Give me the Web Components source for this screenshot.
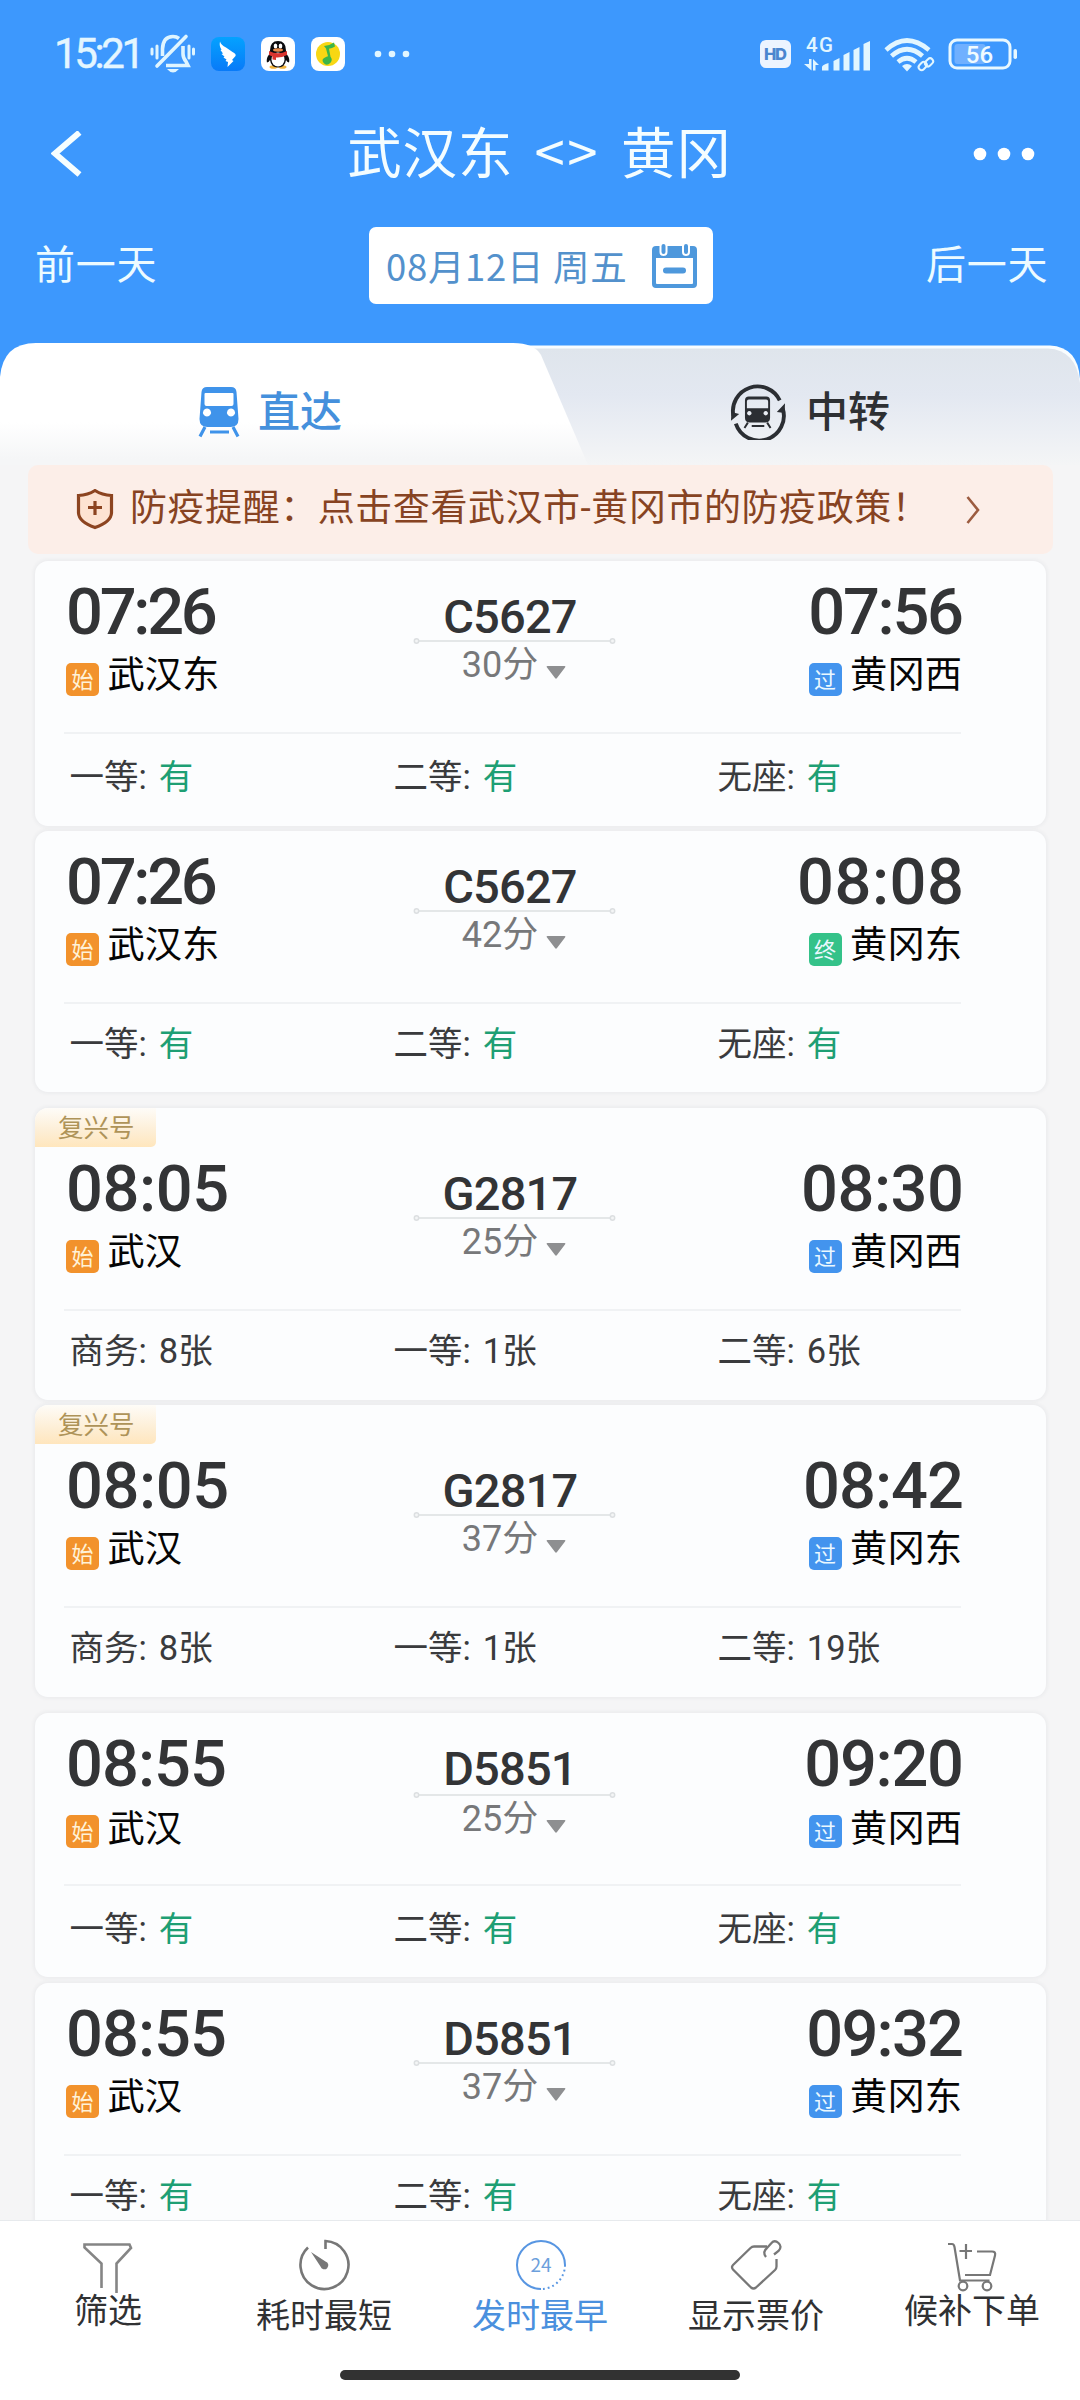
<!DOCTYPE html>
<html lang="zh-CN">
<head>
<meta charset="utf-8">
<title>武汉东 - 黄冈</title>
<style>
  html, body { margin: 0; }
  body {
    width: 1080px;
    height: 2400px;
    overflow: hidden;
    background: #f5f5f6;
    color: #333436;
    font-family: Roboto, "Noto Sans CJK SC", sans-serif;
    display: flex;
    flex-direction: column;
  }
  svg { display: block; }
</style>
</head>
<body>

<status-bar time="15:21"></status-bar>
<nav-header from="武汉东" to="黄冈"></nav-header>
<date-picker>08月12日 周五</date-picker>

<tab-bar>
  <tab-item slot="left" active>
    <svg slot="icon" width="42" height="52" viewBox="0 0 42 52">
      <path fill="#3f93ea" fill-rule="evenodd" d="M9 1h24q5 0 5.500 5L40.500 33q0 8-8 8h-23q-8 0-8-8L3.500 6Q4 1 9 1zM7.500 7q-1 0-1 1v10q0 2 2 2h25q2 0 2-2V8q0-1-1-1zM9 22.500a4 4 0 1 0 .01 0zM33 22.500a4 4 0 1 0 .01 0z"/>
      <path stroke="#3f93ea" stroke-width="3.200" fill="none" d="M7 41L2 50.500M35 41l5 9.500M12 46h19"/>
    </svg>
    直达
  </tab-item>
  <tab-item slot="right">
    <svg slot="icon" width="56" height="56" viewBox="0 0 57 58">
      <g fill="none" stroke="#2b2e33" stroke-width="4">
        <path d="M3 33A25.500 25.500 0 0 1 51 17"/>
        <path d="M54 25A25.500 25.500 0 0 1 5.500 41"/>
      </g>
      <path fill="#2b2e33" d="M0.500 38L1 29l8 2zM56.500 20L56 30l-8-1z"/>
      <path fill="#2b2e33" fill-rule="evenodd" d="M19 13h18q4 0 4 4v18q0 5-5 5H20q-5 0-5-5V17q0-4 4-4zM19 16q-2 0-2 2v7h22v-7q0-2-2-2zM19.500 28a2.300 2.300 0 1 0 .01 0zM36.500 28a2.300 2.300 0 1 0 .01 0z"/>
      <path stroke="#2b2e33" stroke-width="2" fill="none" d="M18 40l-3.500 5.500M38 40l3.500 5.500M22 43.500h13"/>
    </svg>
    中转
  </tab-item>
</tab-bar>

<notice-bar>防疫提醒：点击查看武汉市-黄冈市的防疫政策！</notice-bar>

<train-list>
  <train-card style="height:265px; --seat-shift:3px" no="C5627" depart="07:26" arrive="07:56" dls="-3.300" als="-2.300"
    from="武汉东" to="黄冈西" end="过" cost="30">
    <seat-item name="一等">有</seat-item><seat-item name="二等">有</seat-item><seat-item name="无座">有</seat-item>
  </train-card>
  <train-card style="height:261px; margin-top:5px" no="C5627" depart="07:26" arrive="08:08" dls="-3.300" als="0.500"
    from="武汉东" to="黄冈东" end="终" cost="42">
    <seat-item name="一等">有</seat-item><seat-item name="二等">有</seat-item><seat-item name="无座">有</seat-item>
  </train-card>
  <train-card style="height:292px; margin-top:16px" tag="复兴号" no="G2817" depart="08:05" arrive="08:30" dls="-0.400" als="-0.500"
    from="武汉" to="黄冈西" end="过" cost="25">
    <seat-item name="商务">8张</seat-item><seat-item name="一等">1张</seat-item><seat-item name="二等">6张</seat-item>
  </train-card>
  <train-card style="height:292px; margin-top:5px" tag="复兴号" no="G2817" depart="08:05" arrive="08:42" dls="-0.400" als="-1"
    from="武汉" to="黄冈东" end="过" cost="37">
    <seat-item name="商务">8张</seat-item><seat-item name="一等">1张</seat-item><seat-item name="二等">19张</seat-item>
  </train-card>
  <train-card style="height:264px; margin-top:16px; --seat-shift:3px; --mid-shift:2px" no="D5851" depart="08:55" arrive="09:20" dls="-1" als="-1.300"
    from="武汉" to="黄冈西" end="过" cost="25">
    <seat-item name="一等">有</seat-item><seat-item name="二等">有</seat-item><seat-item name="无座">有</seat-item>
  </train-card>
  <train-card style="height:264px; margin-top:6px" no="D5851" depart="08:55" arrive="09:32" dls="-1" als="-1.800"
    from="武汉" to="黄冈东" end="过" cost="37">
    <seat-item name="一等">有</seat-item><seat-item name="二等">有</seat-item><seat-item name="无座">有</seat-item>
  </train-card>
</train-list>

<bottom-bar>
  <bottom-item raised>
    <svg slot="icon" width="52" height="52" viewBox="0 0 52 52" fill="none" stroke="#858585" stroke-width="2.600">
      <path d="M19.500 46V21.500L2.500 5.500V2.500H47.500L49 6 34.500 21.500V51"/>
    </svg>
    筛选
  </bottom-item>
  <bottom-item>
    <svg slot="icon" width="52" height="52" viewBox="0 0 52 52" fill="none" stroke="#777" stroke-width="2.600">
      <path d="M27.500 10V2A24 24 0 1 1 10 8.500"/>
      <path fill="#777" stroke="none" d="M13 13l14.500 9.500a4 4 0 1 1-5 5z"/>
    </svg>
    耗时最短
  </bottom-item>
  <bottom-item active>
    <svg slot="icon" width="52" height="52" viewBox="-1 0 52 52" fill="none" stroke="#5896e2" stroke-width="2">
      <path d="M26 50A24 24 0 1 1 50 26"/>
      <path stroke-dasharray="1.800 3" d="M50 26A24 24 0 0 1 26 50"/>
      <text x="26" y="33" text-anchor="middle" font-size="19" fill="#6c9fdc" stroke="none" font-family="Noto Sans CJK SC, sans-serif">24</text>
    </svg>
    发时最早
  </bottom-item>
  <bottom-item>
    <svg slot="icon" width="52" height="52" viewBox="0 0 52 52" fill="none" stroke="#777" stroke-width="2.300">
      <path d="M37 7.500H24Q22 7.500 20.500 9L3 26q-2 2 0 4.500L21 48.500q2.500 2 5 0L45 31q1.500-1.500 1.500-3.500V20"/>
      <path d="M36 18q-4-5 1-9l4.500-5q3-3.500 7 0t0 8L44 15.500"/>
    </svg>
    显示票价
  </bottom-item>
  <bottom-item raised>
    <svg slot="icon" width="52" height="52" viewBox="0 0 52 52" fill="none" stroke="#777" stroke-width="2.200">
      <path d="M2 2h4q2 0 2.500 3L14 38.500H43.500"/>
      <path d="M31 9.500H46q4 0 3 4L44 33H19M20 2v15M13.500 9H26"/>
      <circle cx="17" cy="44" r="4.300"/><circle cx="41" cy="44" r="4.300"/>
    </svg>
    候补下单
  </bottom-item>
</bottom-bar>

<script>
class StatusBar extends HTMLElement {
  constructor() {
    super();
    this.attachShadow({ mode: 'open' });
    this.shadowRoot.innerHTML = `
    <style>
      :host { display: flex; align-items: center; height: 108px; padding: 0 62px 0 54px; box-sizing: border-box; background: #3d98fd; color: #e4f6ff; }
      .time { font-size: 42px; font-weight: 400; letter-spacing: -3.4px; line-height: 62px; width: 96px; white-space: nowrap; -webkit-text-stroke: .4px; }
      svg { display: block; flex: none; overflow: visible; }
      .apps { display: flex; gap: 16px; margin-left: 16px; }
      .more { margin-left: 28px; }
      .right { margin-left: auto; display: flex; align-items: center; gap: 13px; }
    </style>
    <span class="time">${this.getAttribute('time')}</span>
    <svg width="45" height="40" viewBox="150 35 45 40" fill="none" stroke="#dff5ff" stroke-width="3">
      <path stroke-linecap="round" d="M152 50v5M157 47v12M189 47v12M193.500 50v5"/>
      <path stroke-width="3.600" d="M162.500 57V50Q163 37.500 173 37.500q3.500 0 6 2M183 47v8q0 4 3 7.500l2 4H166"/>
      <path stroke-width="3.600" stroke-linecap="round" d="M186 37.500L157 67"/>
      <path fill="#dff5ff" stroke="none" d="M167 70h12q-6 7-12 0z"/>
    </svg>
    <div class="apps">
      <svg width="34" height="34" viewBox="0 0 34 34">
        <defs><linearGradient id="d" x2="0" y2="1"><stop stop-color="#04a2ff"/><stop offset="1" stop-color="#087af8"/></linearGradient></defs>
        <rect width="34" height="34" rx="8" fill="url(#d)"/>
        <path fill="#fff" d="M9 4.500q1 3.500 6 6l6.500 4.500q4 2 3 4L21 23l1.500 1-6 6 .5-5-2.500-1 1-1.500-3-2 1-1-3-2.500 1.500-.5-2.500-3.500 1-.3Q8 9 9 4.500z"/>
      </svg>
      <svg width="34" height="34" viewBox="0 0 34 34">
        <rect width="34" height="34" rx="8" fill="#fff"/>
        <ellipse cx="12.500" cy="30" rx="4" ry="1.800" fill="#f2b33c"/><ellipse cx="21.500" cy="30" rx="4" ry="1.800" fill="#f2b33c"/>
        <path fill="#0b0b0e" d="M17 4q8 0 8 9.500 0 2 1 4 3 4 2 8-2-.5-3-2.500-1 7.500-8 7.500T9 23q-1 2-3 2.500-1-4 2-8 1-2 1-4Q9 4 17 4z"/>
        <ellipse cx="17" cy="22.500" rx="6.500" ry="7" fill="#fff"/>
        <ellipse cx="14.500" cy="9" rx="1.800" ry="2.500" fill="#fff"/><ellipse cx="19.500" cy="9" rx="1.800" ry="2.500" fill="#fff"/>
        <ellipse cx="17" cy="13" rx="5" ry="1.700" fill="#e88b4a"/>
        <path fill="#d9342f" d="M8 14q9 4.500 18 0v4q-6 3-11 2.500V23l-3.500-.5V19.500L8 18z"/>
      </svg>
      <svg width="34" height="34" viewBox="0 0 34 34">
        <rect width="34" height="34" rx="8" fill="#fff"/>
        <circle cx="17" cy="17" r="12" fill="#f8d713"/>
        <path fill="#3bb54a" d="M13 9q6-.5 10-3.500l1 4q-3 2-6 2.200l1.500 8q2.500 3 0 6-4 4-7 0t3-6l1.500-.4L15 11.500z"/>
      </svg>
    </div>
    <svg class="more" width="36" height="8" viewBox="0 0 36 8" fill="#e2f6ff">
      <circle cx="5" cy="4" r="3.300"/><circle cx="19" cy="4" r="3.300"/><circle cx="33" cy="4" r="3.300"/>
    </svg>
    <div class="right">
      <svg width="31" height="30" viewBox="0 0 31 30">
        <rect y="1" width="31" height="28" rx="6" fill="#ecf4ff"/>
        <text x="4" y="21" font-size="16.500" font-weight="800" fill="#4b86cf" font-family="Inter, Roboto, sans-serif" textLength="23">HD</text>
      </svg>
      <svg width="67" height="38" viewBox="804 34 67 38" fill="#e2f6ff">
        <text x="806" y="50.500" font-size="20.500" font-weight="500" font-family="Roboto, sans-serif" textLength="27">4G</text>
        <path d="M809 58h2.500v11.500L804 63h5zM813 69.500V58l6 6h-3.500v5.500z"/>
        <path d="M822 69.500V66q0-2 6.500-4v7.500zM833.500 69.500V60l6-3v12.500zM843.500 69.500V54l6-3v18.500zM853.500 69.500V49l6-3v23.500zM863.500 69.500V43l6.500-3v29.500z"/>
      </svg>
      <svg width="51" height="38" viewBox="884 35 51 38" fill="none" stroke="#e2f6ff" stroke-width="4.600">
        <path d="M886 50q20.500-19 43 0M891.500 56q15.500-13.500 31 0M898 62q9-7.500 18 0"/>
        <path fill="#e2f6ff" stroke="none" d="M902 66q5-4 10 0l-5 5.500z"/>
        <g stroke-width="2"><rect x="918" y="63.500" width="9" height="6" rx="3" transform="rotate(-45 922 66)"/><rect x="924" y="60" width="9" height="6" rx="3" transform="rotate(-45 928 62)"/></g>
      </svg>
      <svg width="70" height="32" viewBox="948.500 38 70 32">
        <rect x="950.500" y="40" width="60" height="28" rx="7" fill="none" stroke="#e8f8ff" stroke-width="3"/>
        <rect x="955" y="44" width="31" height="20" rx="3" fill="#6fb0ff"/>
        <rect x="1014" y="49" width="3.500" height="10" rx="1.700" fill="#e8f8ff"/>
        <text x="980" y="62.500" text-anchor="middle" font-size="24" font-weight="500" fill="#f0fbff" font-family="Roboto, sans-serif">56</text>
      </svg>
    </div>`;
  }
}

class NavHeader extends HTMLElement {
  constructor() {
    super();
    this.attachShadow({ mode: 'open' });
    this.shadowRoot.innerHTML = `
    <style>
      :host { display: grid; grid-template-columns: 1fr auto 1fr; align-items: center; height: 92px; padding: 0 45px 0 51px; background: #3d98fd; color: #f4fdff; }
      svg { display: block; }
      .title { font: 400 54.500px/80px "Noto Sans CJK SC", sans-serif; letter-spacing: .9px; word-spacing: 8px; white-space: pre; margin: -8px 7px 0 0; }
      .title b { font-weight: 400; letter-spacing: 2.500px; }
      .dots { justify-self: end; }
    </style>
    <svg width="32" height="46" viewBox="1 0 32 46"><path d="M29.500 1.500L5 22.500 29.500 43.500" fill="none" stroke="#f6feff" stroke-width="6"/></svg>
    <span class="title">${this.getAttribute('from')} <b>&lt;&gt;</b> ${this.getAttribute('to')}</span>
    <svg class="dots" width="62" height="14" viewBox="0 0 62 14" fill="#fff">
      <circle cx="7" cy="7" r="6.300"/><circle cx="31" cy="7" r="6.300"/><circle cx="55" cy="7" r="6.300"/>
    </svg>`;
  }
}

class DatePicker extends HTMLElement {
  constructor() {
    super();
    this.attachShadow({ mode: 'open' });
    this.shadowRoot.innerHTML = `
    <style>
      :host { display: flex; justify-content: space-between; height: 143px; padding: 27px 35px 0; box-sizing: border-box; background: #3d98fd; color: #edfbff; }
      .day { font-size: 40px; letter-spacing: 0.8px; line-height: 78px; width: 121px; white-space: nowrap; }
      .day:last-child { width: 119px; }
      .date { display: flex; align-items: center; justify-content: space-between; width: 344px; height: 77px; padding: 0 16px 0 17px; box-sizing: border-box; border-radius: 7px; background: #fff; color: #5391cc; font: 400 36.5px/70px "Noto Sans CJK SC", sans-serif; white-space: nowrap; letter-spacing: .7px; }
    </style>
    <span class="day">前一天</span>
    <div class="date"><slot></slot>
      <svg width="45" height="46" viewBox="0 0 45 46">
        <path fill="#4e98dc" fill-rule="evenodd" d="M4 3h37q4 0 4 4v34q0 4-4 4H4q-4 0-4-4V7q0-4 4-4zM4 15v25q0 1 1 1h35q1 0 1-1V15z"/>
        <path stroke="#fff" stroke-width="8" stroke-linecap="round" d="M11.500 3v6M34 3v6"/>
        <path stroke="#4e98dc" stroke-width="4" stroke-linecap="round" d="M11.500 3v6M34 3v6"/>
        <path stroke="#4e98dc" stroke-width="6" stroke-linecap="round" d="M14 27.500h17"/>
      </svg>
    </div>
    <span class="day">后一天</span>`;
  }
}

class TabBar extends HTMLElement {
  constructor() {
    super();
    this.attachShadow({ mode: 'open' });
    this.shadowRoot.innerHTML = `
    <style>
      :host { display: grid; height: 122px; }
      svg, .row { grid-area: 1 / 1; display: block; }
      .row { display: grid; grid-template-columns: 1fr 1fr; height: 122px; }
    </style>
    <svg width="1080" height="122" viewBox="0 0 1080 122">
      <defs>
        <linearGradient id="r" x2="0" y2="1">
          <stop stop-color="#dfe5ec"/><stop offset=".4" stop-color="#e3e8f1"/><stop offset=".72" stop-color="#eceff4"/><stop offset="1" stop-color="#f4f5f6"/>
        </linearGradient>
        <linearGradient id="l" x2="0" y2="1">
          <stop offset=".65" stop-color="#fff"/><stop offset=".95" stop-color="#f5f6f7"/>
        </linearGradient>
      </defs>
      <rect width="1080" height="60" fill="#3d98fd"/>
      <path fill="#f9fdff" d="M300 2.500H1050Q1078 4 1080 36V122H300z"/>
      <path fill="url(#r)" d="M300 5.500H1048Q1076 7 1080 40V122H300z"/>
      <path fill="url(#l)" d="M0 122V34Q3 0 36 0H513Q534 0 541 12L588 122z"/>
    </svg>
    <div class="row"><slot name="left"></slot><slot name="right"></slot></div>`;
  }
}

class TabItem extends HTMLElement {
  constructor() {
    super();
    this.attachShadow({ mode: 'open' });
    this.shadowRoot.innerHTML = `
    <style>
      :host { display: flex; align-items: center; justify-content: center; gap: 20px; height: 138px; font-size: 42px; font-weight: 500; line-height: 60px; color: #2e3033; }
      :host([active]) { color: #4590dc; gap: 18px; }
      span { margin-top: 2px; }
    </style>
    <slot name="icon"></slot><span><slot></slot></span>`;
  }
}

class NoticeBar extends HTMLElement {
  constructor() {
    super();
    this.attachShadow({ mode: 'open' });
    this.shadowRoot.innerHTML = `
    <style>
      :host { display: flex; align-items: center; height: 89px; margin: 0 27px 0 28px; padding: 0 73px 0 48px; box-sizing: border-box; border-radius: 10px; background: #fceee8; color: #874322; font-size: 37px; line-height: 60px; white-space: nowrap; }
      span { margin: -1px 0 0 16px; letter-spacing: .55px; }
      .go { margin: 0 0 0 auto; }
      svg { flex: none; }
    </style>
    <svg width="38" height="42" viewBox="0 1 38 42" fill="none" stroke="#8c4420" stroke-width="3.200">
      <path fill="#fde3d2" d="M19 2.500Q26 7 35.500 7.500V25Q35 34 19 39.500 3 34 2.500 25V7.500Q12 7 19 2.500z"/>
      <path d="M12 19.500h14M19 13v14"/>
    </svg>
    <span><slot></slot></span>
    <svg class="go" width="14" height="30" viewBox="0 0 14 30" fill="none" stroke="#9c5c40" stroke-width="2.600"><path d="M1.500 2L12 15 1.500 28"/></svg>`;
  }
}

class TrainList extends HTMLElement {
  constructor() {
    super();
    this.attachShadow({ mode: 'open' });
    this.shadowRoot.innerHTML = `
    <style>
      :host { display: flex; flex-direction: column; flex: 1; min-height: 0; overflow: hidden; padding: 7px 34px 0 35px; }
    </style>
    <slot></slot>`;
  }
}

class StationBadge extends HTMLElement {
  constructor() {
    super();
    this.attachShadow({ mode: 'open' });
    const colors = { '始': '#f2922c', '过': '#4394ee', '终': '#34c289' };
    const name = this.getAttribute('name');
    this.shadowRoot.innerHTML = `
    <style>
      :host { display: block; width: 33px; height: 33px; border-radius: 5px; background: ${colors[name]}; color: #fff2d8; font-size: 22px; line-height: 35px; text-align: center; }
      :host([name="过"]), :host([name="终"]) { color: #eaf8ff; }
    </style>${name}`;
  }
}

class TrainCard extends HTMLElement {
  constructor() {
    super();
    this.attachShadow({ mode: 'open' });
    const at = (key) => this.getAttribute(key);
    this.shadowRoot.innerHTML = `
    <style>
      :host { display: block; flex: none; box-sizing: border-box; overflow: hidden; border-radius: 13px; background: #fcfdfe; box-shadow: 0 0 4px 1px rgba(40, 50, 60, .06); }
      .tag { width: 121px; height: 39px; margin-bottom: -9px; padding-left: 23px; box-sizing: border-box; border-radius: 0 0 5px 0; background: linear-gradient(#fefcf8, #fdeed5 60%, #ffe6bd); color: #ae9358; font-size: 25.500px; line-height: 41px; white-space: nowrap; }
      .trip { display: grid; grid-template-columns: 349px 203px 1fr; height: 171px; margin: 0 85px 0 29px; border-bottom: 2px solid #f0f2f4; }
      .time { margin: 17px 0 0 2px; font-size: 65px; font-weight: 500; line-height: 68px; height: 66px; white-space: nowrap; }
      .end { display: flex; flex-direction: column; align-items: flex-end; }
      .end .time { margin-right: calc(-3px - var(--ls)); }
      .end .station { margin-right: -1px; }
      .station { display: flex; gap: 8.500px; margin: 10px 0 0 2px; font-size: 37.300px; line-height: 43px; color: #050505; white-space: nowrap; }
      .station b { font-weight: 400; margin-top: var(--mid-shift, 0); }
      station-badge { margin-top: 9px; }
      .mid { display: flex; flex-direction: column; align-items: center; }
      .no { margin: 32px 9px 0 0; height: 44px; font-size: 47px; font-weight: 500; line-height: 48px; letter-spacing: -.8px; }
      svg { display: block; }
      .line { margin-top: var(--mid-shift, 0); }
      .cost { display: flex; align-items: center; gap: 8px; font-size: 36px; line-height: 41px; color: #77787a; }
      .cost svg { margin: 13px 1px 0 0; }
      .seats { display: grid; grid-template-columns: repeat(3, 324px); padding: calc(20px + var(--seat-shift, 0px)) 0 0 34.500px; }
    </style>
    ${at('tag') ? `<div class="tag">${at('tag')}</div>` : ''}
    <div class="trip">
      <div>
        <div class="time" style="letter-spacing:${at('dls')}px">${at('depart')}</div>
        <div class="station"><station-badge name="始"></station-badge><b>${at('from')}</b></div>
      </div>
      <div class="mid">
        <div class="no">${at('no')}</div>
        <svg class="line" width="203" height="8" viewBox="0 0 203 8" fill="#f4f5f6" stroke="#dcdfe1" stroke-width="1.500">
          <path d="M5 4H198"/><circle cx="3.500" cy="4" r="2.200"/><circle cx="199.500" cy="4" r="2.200"/>
        </svg>
        <div class="cost">${at('cost')}分<svg width="20" height="13" viewBox="0 0 20 13"><path fill="#8e8f91" d="M1.500 0h17q1.500 0 .5 1.500L11 12q-1 1.500-2 0L1 1.500Q0 0 1.500 0z"/></svg></div>
      </div>
      <div class="end">
        <div class="time" style="--ls:${at('als')}px; letter-spacing:var(--ls)">${at('arrive')}</div>
        <div class="station"><station-badge name="${at('end')}"></station-badge><b>${at('to')}</b></div>
      </div>
    </div>
    <div class="seats"><slot></slot></div>`;
  }
}

class SeatItem extends HTMLElement {
  constructor() {
    super();
    this.attachShadow({ mode: 'open' });
    const many = this.textContent.trim() === '有';
    this.shadowRoot.innerHTML = `
    <style>
      :host { display: flex; font-size: 34.500px; line-height: 40px; color: #3a3b3d; white-space: nowrap; }
      span { margin-left: 12px; }
      .many { color: #1e9f74; }
    </style>
    ${this.getAttribute('name')}:<span class="${many ? 'many' : ''}"><slot></slot></span>`;
  }
}

class BottomBar extends HTMLElement {
  constructor() {
    super();
    this.attachShadow({ mode: 'open' });
    this.shadowRoot.innerHTML = `
    <style>
      :host { display: flex; flex-direction: column; align-items: center; justify-content: space-between; flex: none; height: 180px; box-sizing: border-box; padding-bottom: 20px; border-top: 1px solid #e7eaed; background: #fff; }
      .items { display: grid; grid-template-columns: repeat(5, 216px); }
      .home { width: 400px; height: 10px; border-radius: 5px; background: #323232; }
    </style>
    <div class="items"><slot></slot></div>
    <div class="home"></div>`;
  }
}

class BottomItem extends HTMLElement {
  constructor() {
    super();
    this.attachShadow({ mode: 'open' });
    this.shadowRoot.innerHTML = `
    <style>
      :host { display: flex; flex-direction: column; align-items: center; gap: 4px; padding-top: 18px; font-size: 34px; line-height: 42px; color: #303133; }
      :host([raised]) { padding-top: 21px; gap: 0; }
      :host([raised]) span { margin-top: -4px; }
      :host([active]) { color: #4a90de; }
    </style>
    <slot name="icon"></slot><span><slot></slot></span>`;
  }
}

customElements.define('status-bar', StatusBar);
customElements.define('nav-header', NavHeader);
customElements.define('date-picker', DatePicker);
customElements.define('tab-bar', TabBar);
customElements.define('tab-item', TabItem);
customElements.define('notice-bar', NoticeBar);
customElements.define('train-list', TrainList);
customElements.define('station-badge', StationBadge);
customElements.define('train-card', TrainCard);
customElements.define('seat-item', SeatItem);
customElements.define('bottom-bar', BottomBar);
customElements.define('bottom-item', BottomItem);
</script>
</body>
</html>
